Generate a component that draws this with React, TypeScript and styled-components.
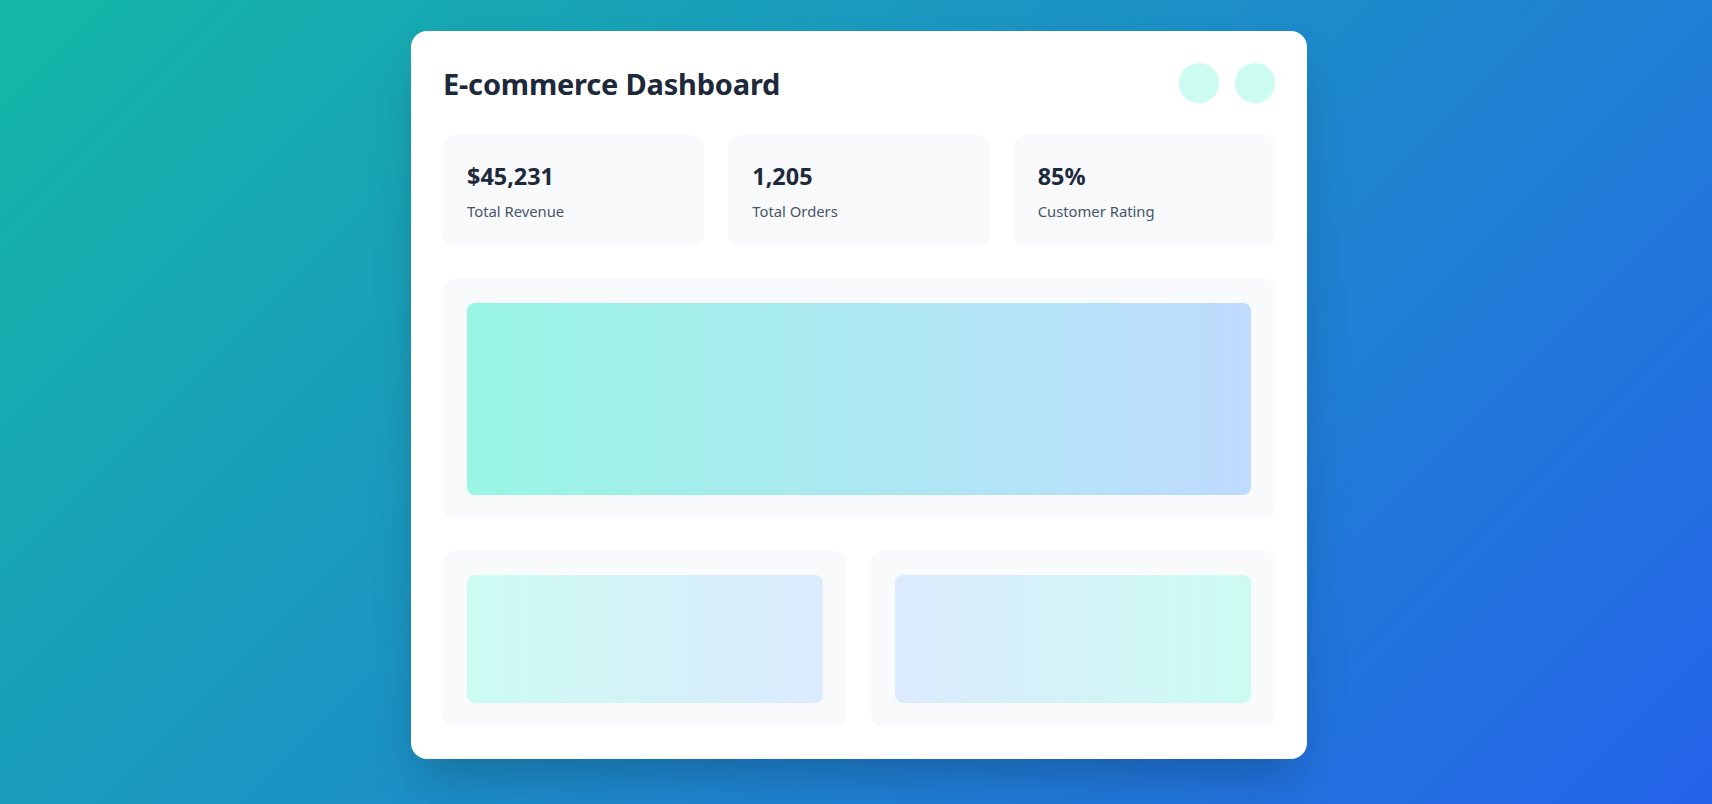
import React from "react";
import styled, { createGlobalStyle } from "styled-components";

const GlobalStyle = createGlobalStyle`
  html, body {
    margin: 0;
    padding: 0;
    height: 100%;
  }
  body {
    font-family: "Noto Sans", "Open Sans", Arial, sans-serif;
    background: linear-gradient(135deg, #14b8a6 0%, #2563eb 100%);
    min-height: 804px;
  }
  * { box-sizing: border-box; }
`;

const Page = styled.div`
  min-height: 804px;
  display: flex;
  justify-content: center;
  align-items: flex-start;
  padding: 31px 0 0 6px;
`;

const Card = styled.div`
  width: 896px;
  background: #ffffff;
  border-radius: 16px;
  padding: 32px;
  box-shadow: 0 25px 50px -12px rgba(0, 0, 0, 0.25);
  display: flex;
  flex-direction: column;
  gap: 32px;
`;

const Header = styled.div`
  display: flex;
  justify-content: space-between;
  align-items: center;
  height: 40px;
`;

const Title = styled.h1`
  margin: 0;
  font-size: 29px;
  font-weight: 700;
  color: #1e293b;
  letter-spacing: -0.2px;
  line-height: 40px;
  padding-top: 2px;
`;

const Actions = styled.div`
  display: flex;
  gap: 16px;
`;

const Dot = styled.div`
  width: 40px;
  height: 40px;
  border-radius: 50%;
  background: #ccfbf1;
`;

const StatsGrid = styled.div`
  display: grid;
  grid-template-columns: repeat(3, 1fr);
  gap: 24px;
`;

const StatCard = styled.div`
  background: #f8fafc;
  border-radius: 12px;
  padding: 24px;
  height: 112px;
`;

const StatValue = styled.div`
  font-size: 23.4px;
  font-weight: 700;
  color: #1e293b;
  line-height: 32px;
  padding-top: 1px;
`;

const StatLabel = styled.div`
  margin-top: 9px;
  font-size: 14.8px;
  color: #475569;
  line-height: 20px;
`;

const Panel = styled.div`
  background: #f8fafc;
  border-radius: 12px;
  padding: 24px;
`;

const Fill = styled.div<{ $h: number; $from: string; $to: string }>`
  height: ${(p) => p.$h}px;
  border-radius: 8px;
  background: linear-gradient(to right, ${(p) => p.$from}, ${(p) => p.$to});
`;

const BottomGrid = styled.div`
  display: grid;
  grid-template-columns: 1fr 1fr;
  gap: 24px;
`;

const stats = [
  { value: "$45,231", label: "Total Revenue" },
  { value: "1,205", label: "Total Orders" },
  { value: "85%", label: "Customer Rating" },
];

export default function App() {
  return (
    <>
      <GlobalStyle />
      <Page>
        <Card>
          <Header>
            <Title>E-commerce Dashboard</Title>
            <Actions>
              <Dot />
              <Dot />
            </Actions>
          </Header>
          <StatsGrid>
            {stats.map((s) => (
              <StatCard key={s.label}>
                <StatValue>{s.value}</StatValue>
                <StatLabel>{s.label}</StatLabel>
              </StatCard>
            ))}
          </StatsGrid>
          <Panel>
            <Fill $h={192} $from="#99f6e4" $to="#bfdbfe" />
          </Panel>
          <BottomGrid>
            <Panel>
              <Fill $h={128} $from="#ccfbf1" $to="#dbeafe" />
            </Panel>
            <Panel>
              <Fill $h={128} $from="#dbeafe" $to="#ccfbf1" />
            </Panel>
          </BottomGrid>
        </Card>
      </Page>
    </>
  );
}
